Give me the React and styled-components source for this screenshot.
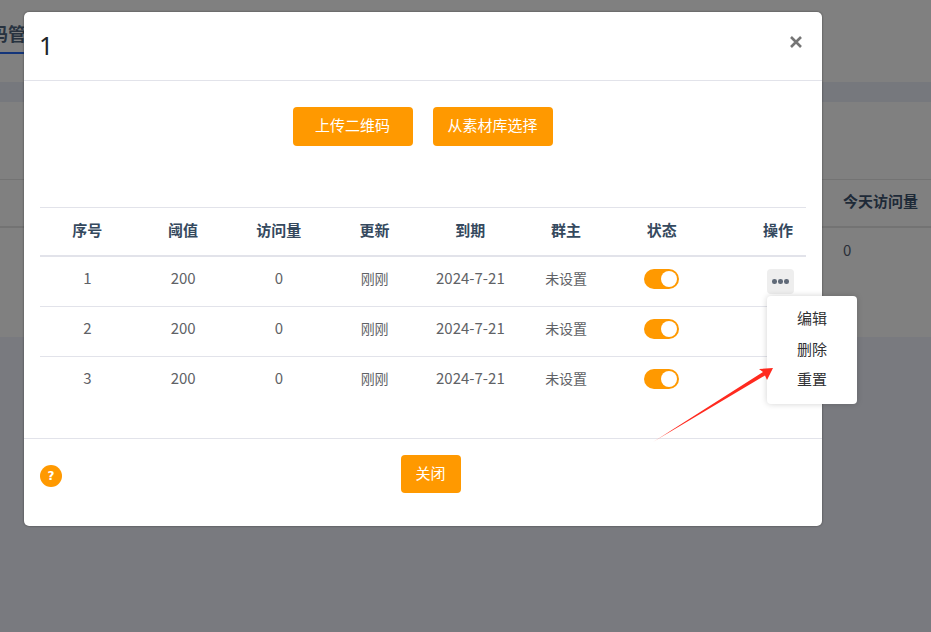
import React from "react";
import styled, { createGlobalStyle } from "styled-components";

const Global = createGlobalStyle`
  html, body { margin: 0; padding: 0; width: 931px; height: 632px; overflow: hidden; }
  body { font-family: "Noto Sans CJK SC", "Noto Sans", sans-serif; font-size: 14px; color: #606266; }
  * { box-sizing: border-box; }
`;

const Page = styled.div`
  position: relative;
  width: 931px;
  height: 632px;
  background: #797a7f;
  overflow: hidden;
`;
const TopBar = styled.div`
  height: 82px;
  background: #808080;
  padding-top: 20px;
`;
const TabLabel = styled.div`
  width: fit-content;
  margin-left: -10px;
  padding-bottom: 6px;
  border-bottom: 2px solid #14357a;
  white-space: nowrap;
  font-size: 18px;
  line-height: 26px;
  font-weight: 700;
  color: #27323f;
`;
const Strip = styled.div`
  height: 20px;
  background: #76787d;
`;
const Card = styled.div`
  height: 235px;
  background: #808080;
  padding-top: 77px;
`;
const BackHead = styled.div`
  height: 49px;
  border-top: 1px solid #737373;
  border-bottom: 2px solid #737373;
  padding-left: 843px;
  font-size: 15px;
  font-weight: 700;
  line-height: 42px;
  color: #1e2a38;
  white-space: nowrap;
`;
const BackCell = styled.div`
  padding: 11px 0 0 843px;
  font-size: 15px;
  line-height: 22px;
  color: #2a2f38;
`;

const Modal = styled.div`
  position: absolute;
  left: 24px;
  top: 12px;
  width: 798px;
  height: 514px;
  background: #fff;
  border-radius: 5px;
  box-shadow: 0 0 2px rgba(40, 40, 40, 0.8);
  display: flex;
  flex-direction: column;
`;
const ModalHead = styled.div`
  height: 69px;
  flex: none;
  border-bottom: 1px solid #e2e3ea;
  display: flex;
  justify-content: space-between;
  padding: 15px 17px 0 16px;
`;
const Title = styled.div`
  font-size: 25px;
  line-height: 36px;
  font-family: "Noto Sans", sans-serif;
  font-weight: 400;
  color: #212529;
  margin-left: -1px;
`;
const Close = styled.div`
  width: 16px;
  height: 16px;
  margin-top: 7px;
  margin-right: 1px;
  color: #757575;
`;
const ModalBody = styled.div`
  height: 357px;
  flex: none;
  padding: 26px 16px 0;
`;
const Actions = styled.div`
  display: flex;
  justify-content: center;
  gap: 20px;
  height: 100px;
`;
const OrangeButton = styled.div`
  width: ${(p) => p.$w}px;
  height: ${(p) => p.$h}px;
  padding: 0 1px ${(p) => p.$lift}px 0;
  background: #ff9900;
  color: #fff;
  border-radius: 4px;
  font-size: 15px;
  display: flex;
  align-items: center;
  justify-content: center;
  white-space: nowrap;
`;
const Table = styled.div`
  width: 766px;
  border-top: 1px solid #e2e3ea;
`;
const HeadRow = styled.div`
  display: grid;
  grid-template-columns: repeat(8, 1fr);
  align-items: center;
  height: 49px;
  padding-bottom: 4px;
  border-bottom: 2px solid #e2e3ea;
`;
const Row = styled.div`
  display: grid;
  grid-template-columns: repeat(8, 1fr);
  align-items: start;
  height: 50px;
  padding-top: 12px;
  border-bottom: ${(p) => (p.$last ? "none" : "1px solid #e2e3ea")};
`;
const HeadCell = styled.div`
  text-align: ${(p) => (p.$right ? "right" : "center")};
  padding-right: ${(p) => (p.$right ? "13px" : "1px")};
  font-size: 15px;
  font-weight: 700;
  color: #35495e;
`;
const Cell = styled.div`
  display: flex;
  justify-content: center;
  padding-right: 1px;
  font-size: ${(p) => (p.$small ? "14px" : "15px")};
  line-height: 18px;
  color: #606266;
`;
const ControlCell = styled.div`
  display: flex;
  justify-content: ${(p) => (p.$right ? "flex-end" : "center")};
  padding-right: ${(p) => (p.$right ? "12px" : "2px")};
`;
const Toggle = styled.div`
  width: 35px;
  height: 20px;
  border-radius: 10px;
  background: #ff9900;
  padding: 2px;
  display: flex;
  justify-content: flex-end;
`;
const Knob = styled.div`
  width: 16px;
  height: 16px;
  border-radius: 50%;
  background: #fff;
`;
const MoreButton = styled.div`
  position: relative;
  width: 27px;
  height: 25px;
  border-radius: 4px;
  background: #eeeeee;
  display: flex;
  align-items: center;
  justify-content: center;
  gap: 1.5px;
`;
const Dot = styled.span`
  width: 4.5px;
  height: 4.5px;
  border-radius: 50%;
  background: #606a78;
`;
const Menu = styled.div`
  position: absolute;
  left: 0;
  top: 27px;
  width: 90px;
  height: 108px;
  padding: 7px 0;
  background: #fff;
  border-radius: 4px;
  box-shadow: 0 0 6px rgba(0, 0, 0, 0.18);
  z-index: 2;
`;
const MenuItem = styled.div`
  height: 30.5px;
  line-height: 30.5px;
  text-align: center;
  font-size: 15px;
  color: #303133;
`;
const ModalFoot = styled.div`
  position: relative;
  flex: 1;
  display: flex;
  justify-content: center;
  padding: 16px 0 0 16px;
  border-top: 1px solid #e2e3ea;
`;
const Help = styled.div`
  position: absolute;
  left: 16px;
  top: 26px;
  width: 22px;
  height: 22px;
  border-radius: 50%;
  background: #ff9900;
  color: #fff;
  font-family: "DejaVu Sans", sans-serif;
  font-size: 12px;
  font-weight: 700;
  display: flex;
  align-items: center;
  justify-content: center;
`;
const Arrow = styled.svg`
  position: absolute;
  left: 650px;
  top: 360px;
  z-index: 3;
  pointer-events: none;
`;

const rows = [1, 2, 3];
const heads = ["序号", "阈值", "访问量", "更新", "到期", "群主", "状态"];

export default function App() {
  return (
    <Page>
      <Global />
      <TopBar>
        <TabLabel>码管</TabLabel>
      </TopBar>
      <Strip />
      <Card>
        <BackHead>今天访问量</BackHead>
        <BackCell>0</BackCell>
      </Card>
      <Modal>
        <ModalHead>
          <Title>1</Title>
          <Close>
            <svg width="16" height="16" viewBox="0 0 16 16" fill="none">
              <path d="M3 3 13 13M13 3 3 13" stroke="currentColor" strokeWidth="2.6" />
            </svg>
          </Close>
        </ModalHead>
        <ModalBody>
          <Actions>
            <OrangeButton $w={120} $h={39} $lift={4}>上传二维码</OrangeButton>
            <OrangeButton $w={120} $h={39} $lift={4}>从素材库选择</OrangeButton>
          </Actions>
          <Table>
            <HeadRow>
              {heads.map((h) => (
                <HeadCell key={h}>{h}</HeadCell>
              ))}
              <HeadCell $right>操作</HeadCell>
            </HeadRow>
            {rows.map((n) => (
              <Row key={n} $last={n === 3}>
                <Cell>{n}</Cell>
                <Cell>200</Cell>
                <Cell>0</Cell>
                <Cell $small>刚刚</Cell>
                <Cell>2024-7-21</Cell>
                <Cell $small>未设置</Cell>
                <ControlCell>
                  <Toggle><Knob /></Toggle>
                </ControlCell>
                <ControlCell $right>
                  {n === 1 && (
                    <MoreButton>
                      <Dot /><Dot /><Dot />
                      <Menu>
                        <MenuItem>编辑</MenuItem>
                        <MenuItem>删除</MenuItem>
                        <MenuItem>重置</MenuItem>
                      </Menu>
                    </MoreButton>
                  )}
                </ControlCell>
              </Row>
            ))}
          </Table>
        </ModalBody>
        <ModalFoot>
          <Help>?</Help>
          <OrangeButton $w={60} $h={38} $lift={4}>关闭</OrangeButton>
        </ModalFoot>
      </Modal>
      <Arrow width="130" height="85" viewBox="0 0 130 85">
        <defs>
          <linearGradient id="arrowFade" x1="3" y1="82" x2="123" y2="8" gradientUnits="userSpaceOnUse">
            <stop offset="0" stopColor="#ff9a90" />
            <stop offset="0.15" stopColor="#ff2a1f" />
          </linearGradient>
        </defs>
        <path d="M3 82 113 12 109 9 123 8 117 20 115 15.5Z" fill="url(#arrowFade)" />
      </Arrow>
    </Page>
  );
}
